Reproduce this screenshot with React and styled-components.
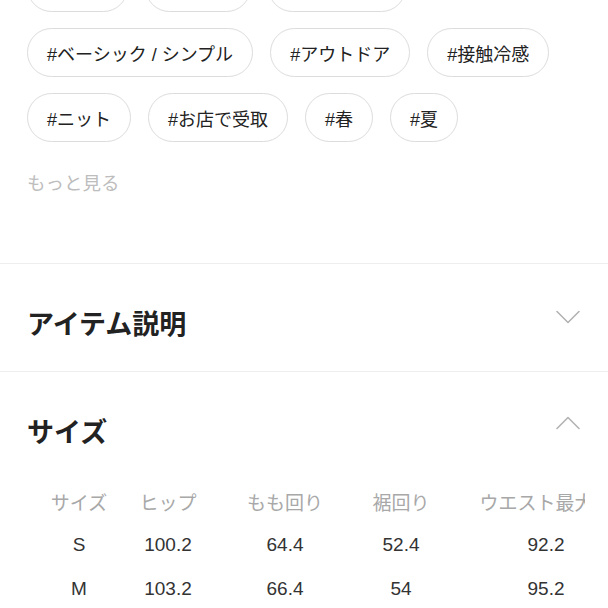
import styled, { createGlobalStyle } from "styled-components";

const GlobalStyle = createGlobalStyle`
  html, body {
    margin: 0;
    padding: 0;
    background: #ffffff;
    overflow: hidden;
  }
  body {
    font-family: "Liberation Sans", "Noto Sans CJK JP", sans-serif;
    color: #222222;
  }
`;

const Page = styled.div`
  width: 608px;
  height: 608px;
  overflow: hidden;
`;

// page is scrolled: the first row of tags is partly above the window
const TagSection = styled.section`
  margin-top: -37px;
  padding: 0 27px 68px;
  border-bottom: 1px solid #eeeeee;
`;

const TagList = styled.div`
  display: flex;
  flex-wrap: wrap;
  gap: 16px 17px;
  width: 540px;
`;

const Tag = styled.span`
  display: inline-flex;
  align-items: center;
  height: 49px;
  width: ${(p) => (p.$w ? `${p.$w}px` : "auto")};
  box-sizing: border-box;
  padding: 0 19px;
  border: 1px solid #dcdcdc;
  border-radius: 999px;
  font-size: 18px;
  color: #222222;
  white-space: nowrap;
`;

const MoreLink = styled.div`
  margin-top: 27px;
  font-family: "Noto Sans CJK JP", sans-serif;
  font-size: 18.5px;
  line-height: 26px;
  color: #bdbdbd;
`;

const Section = styled.section`
  padding: 42px 27px ${(p) => (p.$open ? "0" : "31px")};
  border-bottom: ${(p) => (p.$open ? "none" : "1px solid #eeeeee")};
`;

const SectionHead = styled.div`
  display: flex;
  justify-content: space-between;
  align-items: flex-start;
`;

const SectionTitle = styled.h2`
  margin: 0;
  font-family: "Noto Sans CJK JP", sans-serif;
  font-size: 27px;
  line-height: 34px;
  font-weight: 700;
  color: #222222;
`;

const Chevron = styled.svg`
  display: block;
  margin-top: ${(p) => (p.$up ? "2px" : "4px")};
  margin-right: 1px;
`;

const TableWrap = styled.div`
  margin-top: 31px;
  width: 558px;
  overflow: hidden;
`;

const Row = styled.div`
  display: grid;
  grid-template-columns: 104px 74px 160px 72px 218px;
  height: 44px;
  align-items: center;
  width: 628px;
`;

const Cell = styled.div`
  text-align: center;
  white-space: nowrap;
  font-size: 19px;
  font-family: ${(p) =>
    p.$head ? `"Noto Sans CJK JP", sans-serif` : `"Liberation Sans", "Noto Sans CJK JP", sans-serif`};
  color: ${(p) => (p.$head ? "#a8a8a8" : "#333333")};
`;

// first row sits above the window: only the chip outlines are visible
const hiddenRow = [101, 106, 138];

const tags = [
  "#ベーシック / シンプル",
  "#アウトドア",
  "#接触冷感",
  "#ニット",
  "#お店で受取",
  "#春",
  "#夏",
];

const header = ["サイズ", "ヒップ", "もも回り", "裾回り", "ウエスト最大幅"];
const sizes = [
  ["S", "100.2", "64.4", "52.4", "92.2"],
  ["M", "103.2", "66.4", "54", "95.2"],
];

function ChevronIcon({ up }) {
  return (
    <Chevron $up={up} width="24" height="14" viewBox="0 0 24 14">
      <polyline
        points={up ? "1,12.5 12,1.5 23,12.5" : "1,1.5 12,12.5 23,1.5"}
        fill="none"
        stroke="#b3b3b3"
        strokeWidth="1.6"
        strokeLinecap="round"
        strokeLinejoin="round"
      />
    </Chevron>
  );
}

export default function App() {
  return (
    <Page>
      <GlobalStyle />
      <TagSection>
        <TagList>
          {hiddenRow.map((w, i) => (
            <Tag key={"h" + i} $w={w} />
          ))}
          {tags.map((t) => (
            <Tag key={t}>{t}</Tag>
          ))}
        </TagList>
        <MoreLink>もっと見る</MoreLink>
      </TagSection>

      <Section>
        <SectionHead>
          <SectionTitle>アイテム説明</SectionTitle>
          <ChevronIcon />
        </SectionHead>
      </Section>

      <Section $open>
        <SectionHead>
          <SectionTitle>サイズ</SectionTitle>
          <ChevronIcon up />
        </SectionHead>
        <TableWrap>
          <Row>
            {header.map((h) => (
              <Cell $head key={h}>
                {h}
              </Cell>
            ))}
          </Row>
          {sizes.map((r) => (
            <Row key={r[0]}>
              {r.map((v, i) => (
                <Cell key={i}>{v}</Cell>
              ))}
            </Row>
          ))}
        </TableWrap>
      </Section>
    </Page>
  );
}
